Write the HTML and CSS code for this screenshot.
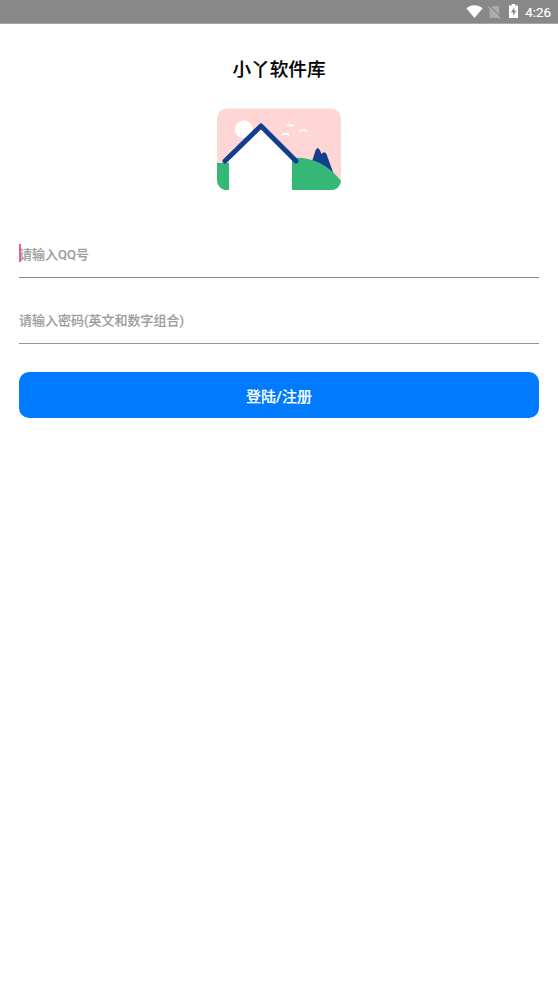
FILE: index.html
```html
<!DOCTYPE html>
<html lang="zh-CN">
<head>
<meta charset="utf-8">
<title>小丫软件库</title>
<link rel="stylesheet" href="styles.css">
</head>
<body>
<header class="status">
  <svg class="wifi" width="17" height="13" viewBox="0 0 17 13"><path d="M.3 3.2C5-.9 12-.9 16.7 3.2L8.5 13z" fill="#fff"/></svg>
  <svg class="sim" width="13" height="14" viewBox="0 0 13 14"><path d="M5 1h6.200v12H1.500V4.500z" fill="#aaa"/><path d="M1 .6L13 12.600" stroke="#888" stroke-width="1.300"/><path d="M.4 1.600L12 13.500" stroke="#b5b5b5" stroke-width="1.200"/></svg>
  <svg class="battery" width="9" height="14" viewBox="0 0 9 14"><path d="M2.700 0h3.600v1.400H9V14H0V1.400h2.700z" fill="#fff"/><path d="M5.300 3.300L1.900 8.300h2.200v3.500l3.200-5H5.300z" fill="#888"/></svg>
  <span class="clock">4:26</span>
</header>
<main class="login">
  <h1 class="title">小丫软件库</h1>
  <svg class="picture" width="124" height="82" viewBox="0 0 124 82">
    <defs><clipPath id="card"><rect y=".4" width="124" height="81.800" rx="10"/></clipPath></defs>
    <g clip-path="url(#card)">
      <rect width="124" height="82" fill="#ffd6d6"/>
      <circle cx="26.700" cy="21.300" r="8.900" fill="#fff"/>
      <path d="M94.500 55L98.500 42.500Q100.700 37.500 103 42.500L104.500 46Q107.500 42.500 109.500 46L117 67z" fill="#123f8c"/>
      <path d="M75 50C94 48.500 111 56 124 73V82H75zM0 55H12V82H0z" fill="#34b777"/>
      <path d="M12 82V49L44 18 75 49V82z" fill="#fff"/>
      <path d="M70 17.400h6.500M65 27q1.500-2 3.400-1.200 2-.8 3.400 1M83 23.600q1.500-2 3.500-1.200 2-.8 3.300 1" fill="none" stroke="#fff" stroke-width="1.700" stroke-linecap="round"/>
      <path d="M8 53L44 18 79 53" fill="none" stroke="#123f8c" stroke-width="5" stroke-linecap="round" stroke-linejoin="round"/>
    </g>
  </svg>
  <div class="field first"><i class="caret"></i><span>请输入QQ号</span></div>
  <div class="field second"><span>请输入密码(英文和数字组合)</span></div>
  <button class="submit">登陆/注册</button>
</main>
</body>
</html>
```
FILE: styles.css
```css
* { box-sizing: border-box; }
body {
  margin: 0;
  min-height: 992px;
  background: #fff;
  font-family: Roboto, "Noto Sans CJK SC", sans-serif;
}
.status {
  display: flex;
  align-items: center;
  justify-content: flex-end;
  height: 24px;
  padding-right: 7px;
  background: #888;
  border-bottom: 1px solid #a8a8a8;
  color: #fff;
}
.wifi { margin-right: 5px; }
.sim { margin-right: 8px; }
.battery { margin-right: 7px; margin-top: -1px; }
.clock { font-size: 13.300px; font-weight: 400; line-height: 23px; padding-top: 1px; -webkit-text-stroke: .2px #fff; }
.login {
  display: flex;
  flex-direction: column;
  padding: 31px 19px 0;
}
.title {
  margin: 0;
  height: 30px;
  line-height: 30px;
  font-size: 18.600px;
  font-weight: 500;
  text-align: center;
  color: #000;
  -webkit-text-stroke: .15px #000;
}
.picture { align-self: center; margin-top: 23px; }
.field {
  position: relative;
  display: flex;
  align-items: center;
  height: 47px;
  padding-bottom: 1px;
  border-bottom: 1px solid #949494;
  font-size: 13px;
  font-weight: 500;
  color: #9e9e9e;
  -webkit-text-stroke: .15px #9e9e9e;
}
.first { margin-top: 41px; padding-bottom: 2px; border-bottom-color: #888; }
.second { margin-top: 19px; }
.caret {
  position: absolute;
  left: 0;
  top: 13px;
  width: 1.500px;
  height: 18px;
  background: #f05a8c;
}
.submit {
  height: 46.400px;
  margin: 28px -.4px 0;
  padding: 0;
  border: 0;
  border-radius: 10px;
  background: #007bff;
  color: #fff;
  font: 500 15px Roboto, "Noto Sans CJK SC", sans-serif;
  -webkit-text-stroke: .15px #fff;
}
```
